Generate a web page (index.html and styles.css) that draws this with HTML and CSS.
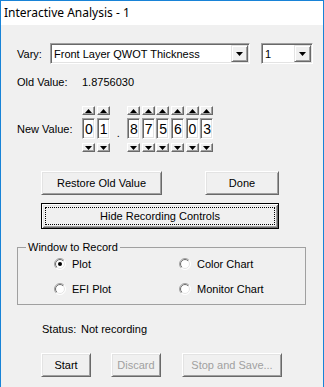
FILE: index.html
```html
<!DOCTYPE html>
<html lang="en">
  <head>
    <meta charset="UTF-8">
    <title>Interactive Analysis - 1</title>
    <link rel="stylesheet" href="styles.css">
  </head>
  <body>
    <svg class="defs" width="0" height="0">
      <defs>
        <linearGradient id="ringOut" x1="0" y1="0" x2="1" y2="1">
          <stop offset="0.5" stop-color="#a0a0a0"/>
          <stop offset="0.5" stop-color="#ffffff"/>
        </linearGradient>
        <linearGradient id="ringIn" x1="0" y1="0" x2="1" y2="1">
          <stop offset="0.5" stop-color="#696969"/>
          <stop offset="0.5" stop-color="#e3e3e3"/>
        </linearGradient>
      </defs>
    </svg>
    <div class="window">
      <div class="titlebar">Interactive Analysis - 1</div>
      <div class="dialog">

        <div class="row vary">
          <span class="label varyLabel">Vary:</span>
          <div class="combo wide">
            <span class="comboText">Front Layer QWOT Thickness</span>
            <span class="comboBtn"><svg width="7" height="4" viewBox="0 0 7 4"><polygon points="0,0 7,0 3.5,4" fill="#000"/></svg></span>
          </div>
          <div class="combo small">
            <span class="comboText">1</span>
            <span class="comboBtn"><svg width="7" height="4" viewBox="0 0 7 4"><polygon points="0,0 7,0 3.5,4" fill="#000"/></svg></span>
          </div>
        </div>

        <div class="row oldValue">
          <span class="label valueLabel">Old Value:</span>
          <span>1.8756030</span>
        </div>

        <div class="row newValue">
          <span class="label valueLabel">New Value:</span>
          <div class="digits" id="digits"></div>
        </div>

        <div class="row buttons firstButtons">
          <button class="btn restore">Restore Old Value</button>
          <button class="btn done">Done</button>
        </div>
        <div class="row buttons">
          <button class="btn default hide"><span class="focus">Hide Recording Controls</span></button>
        </div>

        <fieldset class="group">
          <legend>Window to Record</legend>
          <div class="radios">
            <label class="radio"><svg width="12" height="12" viewBox="0 0 12 12"><circle cx="6" cy="6" r="5.5" fill="#fff" stroke="url(#ringOut)"/><circle cx="6" cy="6" r="4.5" fill="#fff" stroke="url(#ringIn)"/><circle cx="6" cy="6" r="2" fill="#000"/></svg>Plot</label>
            <label class="radio"><svg width="12" height="12" viewBox="0 0 12 12"><circle cx="6" cy="6" r="5.5" fill="#fff" stroke="url(#ringOut)"/><circle cx="6" cy="6" r="4.5" fill="#fff" stroke="url(#ringIn)"/></svg>Color Chart</label>
            <label class="radio"><svg width="12" height="12" viewBox="0 0 12 12"><circle cx="6" cy="6" r="5.5" fill="#fff" stroke="url(#ringOut)"/><circle cx="6" cy="6" r="4.5" fill="#fff" stroke="url(#ringIn)"/></svg>EFI Plot</label>
            <label class="radio"><svg width="12" height="12" viewBox="0 0 12 12"><circle cx="6" cy="6" r="5.5" fill="#fff" stroke="url(#ringOut)"/><circle cx="6" cy="6" r="4.5" fill="#fff" stroke="url(#ringIn)"/></svg>Monitor Chart</label>
          </div>
        </fieldset>

        <div class="row status">
          <span class="statusLabel">Status:</span>
          <span>Not recording</span>
        </div>

        <div class="row buttons lastButtons">
          <button class="btn start">Start</button>
          <button class="btn discard" disabled>Discard</button>
          <button class="btn stop" disabled>Stop and Save...</button>
        </div>
      </div>
    </div>
    <script>
      // build the digit spinners: 2 digits, a point, 6 digits
      let value = "01.875603";
      let digits = document.getElementById("digits");
      let up = '<span class="arrow"><svg width="7" height="4" viewBox="0 0 7 4"><polygon points="3.5,0 7,4 0,4" fill="#000"/></svg></span>';
      let down = '<span class="arrow"><svg width="7" height="4" viewBox="0 0 7 4"><polygon points="0,0 7,0 3.5,4" fill="#000"/></svg></span>';
      for (let ch of value) {
        let col = document.createElement("div");
        if (ch === ".") {
          col.className = "point";
          col.innerHTML = '<span class="dot">.</span>';
        } else {
          col.className = "spin";
          col.innerHTML = up + '<span class="digit">' + ch + '</span>' + down;
        }
        digits.appendChild(col);
      }
    </script>
  </body>
</html>
```
FILE: styles.css
```css
body {
  margin: 0;
  font-family: "Liberation Sans", Arial, sans-serif;
  font-size: 11px;
  color: #000;
}
.defs {
  position: absolute;
}
.window {
  box-sizing: border-box;
  width: 324px;
  height: 387px;
  border: 1px solid #1883d7;
  border-bottom: none;
  background-color: #f0f0f0;
}
.titlebar {
  height: 24px;
  line-height: 24px;
  padding-left: 3px;
  background-color: #fff;
  font-family: "Noto Sans", "Open Sans", sans-serif;
  font-size: 12px;
}
.dialog {
  padding-left: 16px;
}
.row {
  display: flex;
  align-items: center;
  line-height: 14px;
}
.vary {
  margin-top: 18px;
}
.varyLabel {
  width: 33px;
}
.valueLabel {
  width: 65px;
}
.combo {
  box-sizing: border-box;
  height: 21px;
  display: flex;
  align-items: center;
  padding: 1px;
  background-color: #fff;
  border: 1px solid;
  border-color: #a0a0a0 #fff #fff #a0a0a0;
  box-shadow: inset 1px 1px #696969, inset -1px -1px #e3e3e3;
}
.wide {
  width: 200px;
}
.small {
  width: 52px;
  margin-left: 11px;
}
.comboText {
  flex: 1;
  padding-left: 2px;
  white-space: nowrap;
  overflow: hidden;
}
.comboBtn {
  box-sizing: border-box;
  width: 17px;
  height: 17px;
  display: flex;
  align-items: center;
  justify-content: center;
  background-color: #f0f0f0;
  border: 1px solid;
  border-color: #e3e3e3 #696969 #696969 #e3e3e3;
  box-shadow: inset 1px 1px #fff, inset -1px -1px #a0a0a0;
}
.oldValue {
  margin-top: 11px;
}
.newValue {
  margin-top: 17px;
}
.digits {
  display: flex;
  gap: 1.67px;
}
.spin {
  display: flex;
  flex-direction: column;
  width: 13px;
}
.arrow {
  box-sizing: border-box;
  height: 9px;
  display: flex;
  align-items: center;
  justify-content: center;
  border: 1px solid;
  border-color: #fff #696969 #696969 #fff;
  box-shadow: inset -1px -1px #a0a0a0;
}
.digit {
  box-sizing: border-box;
  height: 21px;
  margin: 3px 0 4px;
  padding: 2px 0 0 2px;
  background-color: #fff;
  border: 1px solid;
  border-color: #a0a0a0 #fff #fff #a0a0a0;
  box-shadow: inset 1px 1px #696969, inset -1px -1px #e3e3e3;
  font-size: 14px;
  line-height: 16px;
}
.point {
  width: 14px;
  display: flex;
  align-items: center;
  justify-content: center;
  padding-top: 8px;
}
.buttons {
  padding-left: 24px;
}
.firstButtons {
  margin-top: 19px;
}
.btn {
  box-sizing: border-box;
  height: 24px;
  padding: 0;
  font-family: inherit;
  font-size: 11px;
  color: #000;
  background-color: #f0f0f0;
  border: 1px solid;
  border-color: #fff #696969 #696969 #fff;
  box-shadow: inset 1px 1px #e3e3e3, inset -1px -1px #a0a0a0;
}
.btn:disabled {
  color: #a0a0a0;
}
.restore {
  width: 121px;
}
.done {
  width: 74px;
  margin-left: 43px;
}
.default {
  margin-top: 8px;
  height: 26px;
  padding: 3px;
  border: 1px solid #000;
  box-shadow: inset 1px 1px #fff, inset -1px -1px #696969, inset 2px 2px #e3e3e3, inset -2px -2px #a0a0a0;
}
.hide {
  width: 238px;
}
.focus {
  box-sizing: border-box;
  display: flex;
  align-items: center;
  justify-content: center;
  height: 100%;
  border: 1px dotted #000;
}
.group {
  width: 289px;
  box-sizing: border-box;
  margin: 11px 0 0;
  padding: 0 0 5px;
  border: 1px solid #a0a0a0;
}
.group legend {
  margin-left: 8px;
  padding: 0 2px;
  line-height: 14px;
}
.radios {
  display: grid;
  grid-template-columns: 125px auto;
  row-gap: 5px;
  padding-left: 36px;
}
.radio {
  display: flex;
  align-items: center;
  gap: 6px;
  height: 20px;
}
.status {
  margin-top: 17px;
  padding-left: 25px;
}
.statusLabel {
  width: 39px;
}
.lastButtons {
  margin-top: 17px;
}
.start {
  width: 50px;
}
.discard {
  width: 50px;
  margin-left: 20px;
}
.stop {
  width: 100px;
  margin-left: 21px;
}
```
